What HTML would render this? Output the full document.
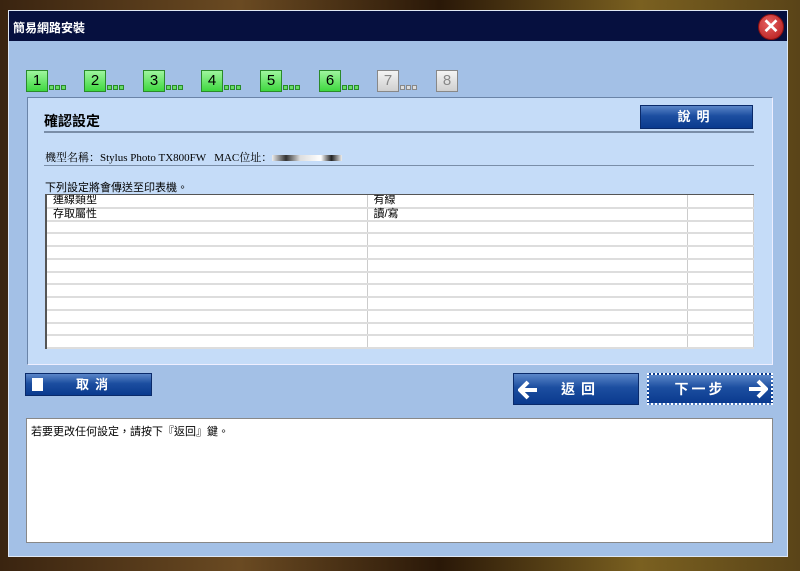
<!DOCTYPE html>
<html><head><meta charset="utf-8"><style>
*{margin:0;padding:0;box-sizing:border-box}
body{width:800px;height:571px;overflow:hidden;position:relative;font-family:"Liberation Sans","Noto Sans CJK TC",sans-serif;background:linear-gradient(90deg,#3a2410 0%,#6a4a22 30%,#2a1808 55%,#7a6020 80%,#5a4418 100%)}
.win{position:absolute;left:8px;top:10px;width:780px;height:547px;background:#a3c0e6;border:1px solid #dfe8f5}
.title{position:absolute;left:0;top:0;width:100%;height:30px;background:#06103f;color:#fff;font-size:12px;font-weight:bold;padding:8px 0 0 4px}
.close{position:absolute;right:3px;top:3px;width:26px;height:26px;border-radius:50%;background:radial-gradient(circle at 40% 35%,#e86060,#b01818);border:1px solid #8a1010;color:#fff;font-size:20px;font-weight:bold;text-align:center;line-height:24px}
.step{position:absolute;top:59px;width:22px;height:22px;border:1px solid #2a8a2a;background:linear-gradient(#9ef59e,#3fd83f);font-size:15px;text-align:center;line-height:20px;color:#000}
.step.g{background:linear-gradient(#f4f4f4,#cfcfcf);border-color:#888;color:#888}
.dots{position:absolute;top:74px;font-size:0}
.dots i{display:inline-block;width:5px;height:5px;border:1px solid #2a8a2a;background:#6d6;margin-right:1px}
.dots.g i{border-color:#888;background:#ddd}
.panel{position:absolute;left:18px;top:86px;width:746px;height:268px;background:#c5dcf8;border:1px solid #6a84a8;border-right-color:#eef;border-bottom-color:#eef}
.btn{position:absolute;background:linear-gradient(#5b86c8 0%,#1c4ea0 45%,#0a3a8e 100%);color:#fff;font-weight:bold;font-size:13px;text-align:center;border:1px solid #0a2a6a;letter-spacing:6px}
.hr{position:absolute;height:2px;background:#7a8ea8}
.tw{position:absolute;left:36px;top:183px;width:709px;height:155px;background:#fff;border-left:2px solid #555;border-top:1px solid #555;overflow:hidden}
table{width:100%;border-collapse:collapse}
td{height:12.75px;border-bottom:2px solid #ddd;border-right:1px solid #ccc;font-size:11px;line-height:10px;padding-left:6px;vertical-align:top}
.msg{position:absolute;left:17px;top:407px;width:747px;height:125px;background:#fff;border:1px solid #888;font-size:11px;padding:4px}
svg{position:absolute}
</style></head><body>
<div class="win">
<div class="title">簡易網路安裝</div>
<div class="close">✕</div>
<div class="step" style="left:17px">1</div><div class="dots" style="left:40px"><i></i><i></i><i></i></div>
<div class="step" style="left:75px">2</div><div class="dots" style="left:98px"><i></i><i></i><i></i></div>
<div class="step" style="left:134px">3</div><div class="dots" style="left:157px"><i></i><i></i><i></i></div>
<div class="step" style="left:192px">4</div><div class="dots" style="left:215px"><i></i><i></i><i></i></div>
<div class="step" style="left:251px">5</div><div class="dots" style="left:274px"><i></i><i></i><i></i></div>
<div class="step" style="left:310px">6</div><div class="dots" style="left:333px"><i></i><i></i><i></i></div>
<div class="step g" style="left:368px">7</div><div class="dots g" style="left:391px"><i></i><i></i><i></i></div>
<div class="step g" style="left:427px">8</div>
<div class="panel"></div>
<div style="position:absolute;left:35px;top:100px;font-size:14px;font-weight:bold">確認設定</div>
<div class="btn" style="left:631px;top:94px;width:113px;height:24px;line-height:22px">說明</div>
<div class="hr" style="left:35px;top:120px;width:710px"></div>
<div style="position:absolute;left:36px;top:138px;font-size:11px;font-family:'Liberation Serif','Noto Serif CJK SC',serif">機型名稱：Stylus Photo TX800FW &nbsp; MAC位址：<span style="display:inline-block;width:70px;height:6px;background:linear-gradient(90deg,#eee,#333 20%,#ddd 40%,#fff 70%,#222 85%,#eee)"></span></div>
<div class="hr" style="left:35px;top:154px;width:710px;height:1px"></div>
<div style="position:absolute;left:36px;top:168px;font-size:11px">下列設定將會傳送至印表機。</div>
<div class="tw"><table>
<tr><td style="width:320px">連線類型</td><td style="width:320px">有線</td><td></td></tr>
<tr><td>存取屬性</td><td>讀/寫</td><td></td></tr>
<tr><td></td><td></td><td></td></tr><tr><td></td><td></td><td></td></tr><tr><td></td><td></td><td></td></tr><tr><td></td><td></td><td></td></tr><tr><td></td><td></td><td></td></tr><tr><td></td><td></td><td></td></tr><tr><td></td><td></td><td></td></tr><tr><td></td><td></td><td></td></tr><tr><td></td><td></td><td></td></tr><tr><td></td><td></td><td></td></tr>
</table></div>
<div class="btn" style="left:16px;top:362px;width:127px;height:23px;line-height:21px;text-align:left;padding-left:50px">取消<span style="position:absolute;left:6px;top:4px;width:11px;height:13px;background:#fff"></span></div>
<div class="btn" style="left:504px;top:362px;width:126px;height:32px;line-height:30px;font-size:14px"><svg style="left:4px;top:6px" width="20" height="20" viewBox="0 0 20 20"><path d="M10 2 L2 10 L10 18 M2 10 H19" stroke="#fff" stroke-width="4" fill="none" stroke-linejoin="miter"/></svg><span style="margin-left:10px">返回</span></div>
<div class="btn" style="left:638px;top:362px;width:126px;height:32px;line-height:28px;font-size:14px;border:2px dotted #fff"><span style="letter-spacing:3px;margin-right:20px">下一步</span><svg style="right:3px;top:4px" width="20" height="20" viewBox="0 0 20 20"><path d="M10 2 L18 10 L10 18 M18 10 H1" stroke="#fff" stroke-width="4" fill="none"/></svg></div>
<div class="msg">若要更改任何設定，請按下『返回』鍵。</div>
</div>
</body></html>
